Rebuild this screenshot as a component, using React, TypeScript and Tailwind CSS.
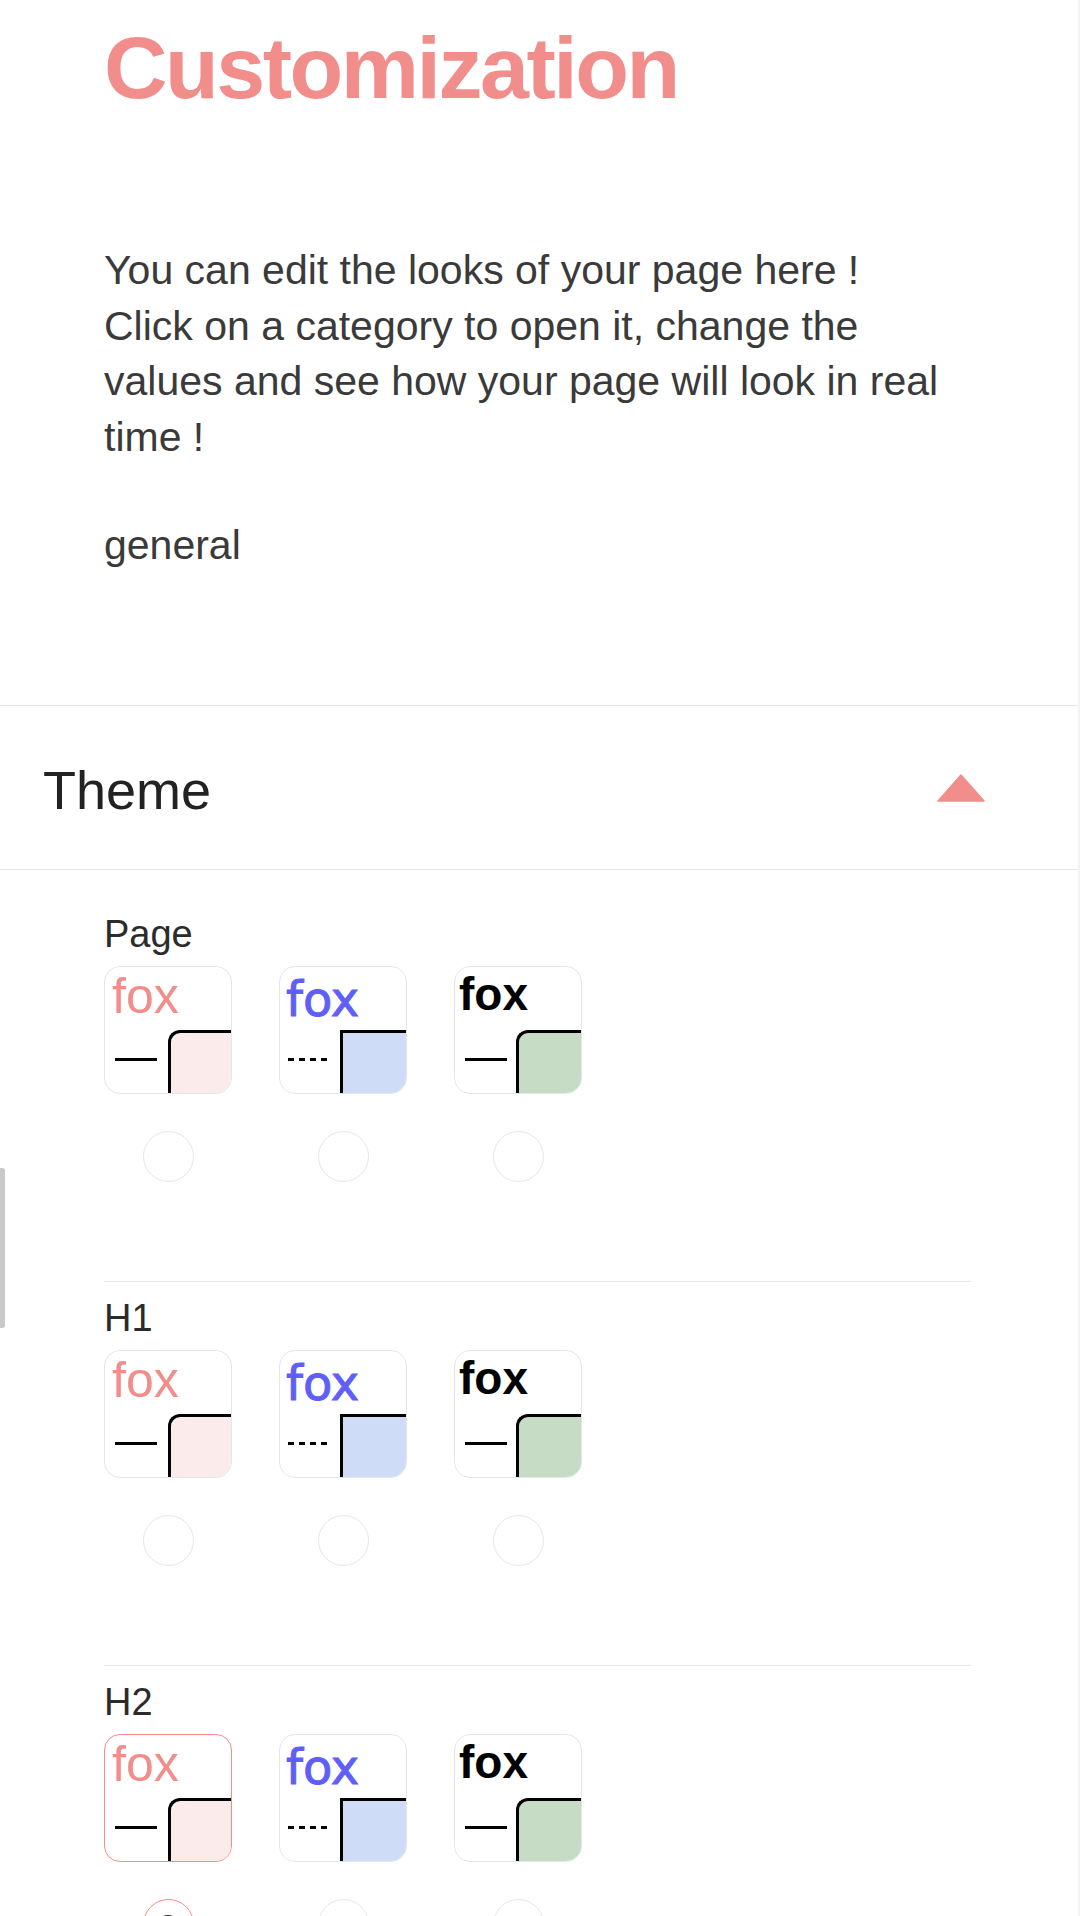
import React from 'react';

type Variant = {
  textClass: string;
  leftClass: string;
  dashed: boolean;
  boxClass: string;
};

const variants: Variant[] = [
  {
    textClass: "pl-[7px] pt-[4px] font-['Liberation_Sans',Arial,sans-serif] text-[50px] leading-[50px] text-[#f18e8b]",
    leftClass: 'w-[63px] pl-[10px]',
    dashed: false,
    boxClass: 'rounded-tl-[12px] bg-[#fbeceb]',
  },
  {
    textClass:
      "pl-[6px] pt-[8px] font-['DejaVu_Sans',Verdana,sans-serif] text-[48px] leading-[48px] text-[#5f5ff7] [-webkit-text-stroke:1px_#5f5ff7]",
    leftClass: 'w-[60px] pl-[8px]',
    dashed: true,
    boxClass: 'bg-[#cfdcf8]',
  },
  {
    textClass: "pl-[4px] pt-[4px] font-['Liberation_Sans',Arial,sans-serif] text-[46px] font-bold leading-[46px] text-black",
    leftClass: 'w-[61px] pl-[10px]',
    dashed: false,
    boxClass: 'rounded-tl-[12px] bg-[#c6dcc5]',
  },
];

const ThemeCard = ({ v, selected }: { v: Variant; selected: boolean }) => (
  <div
    className={`flex h-[128px] w-[128px] flex-col overflow-hidden rounded-[16px] border ${
      selected ? 'border-[#f18e8b]' : 'border-[#e6e6e6]'
    }`}
  >
    <div className="h-[63px]">
      <div className={v.textClass}>fox</div>
    </div>
    <div className="flex flex-1">
      <div className={`${v.leftClass} pt-[28px]`}>
        {v.dashed ? (
          <svg width="42" height="3" className="block">
            <line x1="0" y1="1.5" x2="42" y2="1.5" stroke="black" strokeWidth="3" strokeDasharray="6 5" />
          </svg>
        ) : (
          <div className="h-[3px] w-[42px] bg-black" />
        )}
      </div>
      <div className={`flex-1 border-l-[3px] border-t-[3px] border-black ${v.boxClass}`} />
    </div>
  </div>
);

const Section = ({
  label,
  first,
  selected,
}: {
  label: string;
  first?: boolean;
  selected?: number;
}) => (
  <div className={first ? 'pt-[45px] pb-[99px]' : 'border-t border-[#e8e8e8] pt-[17px] pb-[99px]'}>
    <div className="text-[38px] leading-[38px] text-[#2b2b2b]">{label}</div>
    <div className="mt-[13px] flex gap-[47px]">
      {variants.map((v, i) => (
        <ThemeCard key={i} v={v} selected={selected === i} />
      ))}
    </div>
    <div className="mt-[37px] flex gap-[47px]">
      {variants.map((_, i) => (
        <div key={i} className="flex w-[128px] justify-center">
          <div
            className={`flex h-[51px] w-[51px] items-center justify-center rounded-full border ${
              selected === i ? 'border-[#f18e8b]' : 'border-[#e6e6e6]'
            }`}
          >
            {selected === i && <div className="h-[20px] w-[20px] rounded-full bg-[#222]" />}
          </div>
        </div>
      ))}
    </div>
  </div>
);

export default function App() {
  return (
    <div className="relative h-[1916px] w-full overflow-hidden bg-white font-['Liberation_Sans',Arial,sans-serif] text-[#2b2b2b]">
      <div className="px-[104px] pt-[24px]">
        <h1 className="text-[88px] font-bold leading-[88px] tracking-[-2.5px] text-[#f18e8b]">Customization</h1>
        <p className="mt-[131px] w-[840px] text-[41px] leading-[55.5px] text-[#3a3a3a]">
          You can edit the looks of your page here !
          <br />
          Click on a category to open it, change the values and see how your page will look in real time !
        </p>
        <p className="mt-[52px] text-[41px] leading-[56px] text-[#3a3a3a]">general</p>
      </div>

      <div className="mt-[132px] flex h-[165px] items-center justify-between border-y border-[#e6e6e6] pl-[43px] pr-[95px]">
        <span className="pt-[4px] text-[54px] leading-none text-[#222]">Theme</span>
        <svg width="48" height="28" viewBox="0 0 48 28">
          <path d="M24 1 L47 27 L1 27 Z" fill="#f18e8b" stroke="#f18e8b" strokeWidth="1.5" strokeLinejoin="round" />
        </svg>
      </div>

      <div className="ml-[104px] w-[867px]">
        <Section label="Page" first />
        <Section label="H1" />
        <Section label="H2" selected={0} />
      </div>

      {/* side handle */}
      <div className="absolute left-0 top-[1168px] h-[160px] w-[5px] rounded-r-[3px] bg-[#c9c9c9]" />
      <div className="absolute right-0 top-0 h-full w-[2px] bg-[#f4f4f4]" />
    </div>
  );
}
